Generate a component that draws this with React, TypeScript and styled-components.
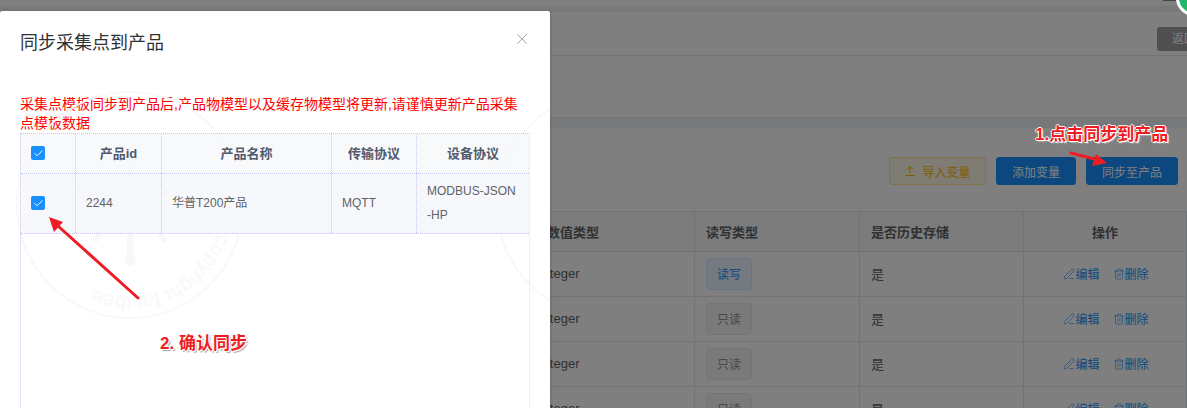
import React from 'react';
import styled, { createGlobalStyle } from 'styled-components';
import { PenLine, Trash2, X, Check } from 'lucide-react';

const GlobalStyle = createGlobalStyle`
  html, body {
    margin: 0;
    padding: 0;
    background: #808080;
    font-family: "Liberation Sans", "Noto Sans CJK SC", sans-serif;
  }
`;

const Frame = styled.div`
  position: relative;
  width: 1187px;
  height: 408px;
  overflow: hidden;
`;

/* page behind the dialog */
const Page = styled.div`
  background: #fff;
  height: 408px;
`;

const TopBand = styled.div`
  height: 6px;
  background: #fff;
  border-bottom: 6px solid #f3f3f3;
`;

const HeaderCard = styled.div`
  height: 105px;
`;

const HeaderRow = styled.div`
  display: flex;
  justify-content: flex-end;
  height: 44px;
  padding-top: 15px;
  box-sizing: border-box;
  border-bottom: 1px solid #e6e6e6;
`;

const BackButton = styled.div`
  width: 60px;
  height: 24px;
  margin-right: -30px;
  padding-left: 15px;
  box-sizing: border-box;
  border-radius: 3px;
  background: #a0a0a6;
  color: #fff;
  font-size: 12px;
  line-height: 24px;
`;

const Band = styled.div`
  height: 10px;
  background: #eff0f3;
  border-top: 1px solid #e8e8ea;
`;

const Toolbar = styled.div`
  display: flex;
  justify-content: flex-end;
  gap: 10px;
  padding: 29px 9px 26px 0;
`;

const ToolButton = styled.div<{ $plain?: boolean }>`
  display: flex;
  align-items: center;
  justify-content: center;
  gap: 6px;
  box-sizing: border-box;
  height: 28px;
  border-radius: 3px;
  font-size: 12px;
  width: ${p => (p.$plain ? '97px' : 'auto')};
  padding: ${p => (p.$plain ? '0' : '0 15px')};
  border: 1px solid ${p => (p.$plain ? '#ffe399' : '#1890ff')};
  background: ${p => (p.$plain ? '#fff8e6' : '#1890ff')};
  color: ${p => (p.$plain ? '#ffba00' : '#fff')};
`;

const DataTable = styled.div`
  display: grid;
  grid-template-columns: 536px 159px 165px 164px 163px;
  grid-template-rows: 40px repeat(4, 45px);
  border-top: 1px solid #dfe6ec;
`;

const HeadCell = styled.div<{ $center?: boolean }>`
  display: flex;
  align-items: center;
  justify-content: ${p => (p.$center ? 'center' : 'flex-start')};
  padding-left: ${p => (p.$center ? '0' : '11px')};
  border-right: 1px solid #dfe6ec;
  border-bottom: 1px solid #dfe6ec;
  background: #f8f8f9;
  color: #606266;
  font-size: 13px;
  font-weight: 700;
`;

const BodyCell = styled.div<{ $center?: boolean; $inset?: number }>`
  display: flex;
  align-items: center;
  justify-content: ${p => (p.$center ? 'center' : 'flex-start')};
  gap: 13px;
  padding-left: ${p => (p.$center ? 2 : p.$inset ?? 11)}px;
  padding-bottom: 1px;
  border-right: 1px solid #dfe6ec;
  border-bottom: 1px solid #dfe6ec;
  color: #606266;
  font-size: 13px;
`;

const Tag = styled.span<{ $active?: boolean }>`
  display: flex;
  align-items: center;
  justify-content: center;
  box-sizing: border-box;
  width: 46px;
  height: 32px;
  border-radius: 4px;
  font-size: 12px;
  border: 1px solid ${p => (p.$active ? '#d1e9ff' : '#e9e9eb')};
  background: ${p => (p.$active ? '#e8f4ff' : '#f4f4f5')};
  color: ${p => (p.$active ? '#1890ff' : '#909399')};
`;

const ActionLink = styled.span`
  display: inline-flex;
  align-items: center;
  color: #1890ff;
  font-size: 12px;
`;

const Overlay = styled.div`
  position: absolute;
  inset: 0;
  background: rgba(0, 0, 0, 0.5);
`;

/* dialog */
const Dialog = styled.div`
  position: absolute;
  left: 0;
  top: 11px;
  width: 550px;
  height: 420px;
  box-sizing: border-box;
  padding: 0 20px;
  border-radius: 2px;
  background: #fff;
  box-shadow: 0 1px 3px rgba(0, 0, 0, 0.3);
  overflow: hidden;
`;

const DialogHeader = styled.div`
  display: flex;
  align-items: center;
  justify-content: space-between;
  height: 62px;
`;

const DialogTitle = styled.span`
  color: #303133;
  font-size: 18px;
  position: relative;
  top: -1px;
`;

const CloseButton = styled.span`
  display: flex;
  color: #909399;
  margin-right: -1px;
  position: relative;
  top: -3px;
`;

const Warning = styled.p`
  margin: 22px 0 0;
  width: 510px;
  color: #ff0000;
  font-size: 14px;
  line-height: 19px;
`;

const Stamp = styled.svg`
  position: absolute;
  left: 0;
  top: 78px;
  pointer-events: none;
`;

const PickTable = styled.div`
  position: relative;
  height: 275px;
  border-left: 1px dotted #c4c4f2;
  border-right: 1px dotted #dcdcf6;
  border-top: 1px dotted #c4c4f2;
`;

const PickRow = styled.div<{ $head?: boolean }>`
  display: grid;
  grid-template-columns: 55px 86px 170px 85px 1fr;
  box-sizing: border-box;
  height: ${p => (p.$head ? '40px' : '60px')};
  border-bottom: 1px dotted #c4c4f2;
  background: ${p => (p.$head ? 'rgba(247, 248, 250, 0.85)' : 'rgba(245, 247, 250, 0.85)')};
`;

const PickCell = styled.div<{ $head?: boolean }>`
  display: flex;
  align-items: center;
  justify-content: ${p => (p.$head ? 'center' : 'flex-start')};
  padding: ${p => (p.$head ? '0' : '0 10px 1px')};
  border-right: 1px dotted #c4c4f2;
  color: ${p => (p.$head ? '#515a6e' : '#606266')};
  font-size: ${p => (p.$head ? '13px' : '12px')};
  font-weight: ${p => (p.$head ? 700 : 400)};
  line-height: 24px;
  word-break: break-all;

  &:last-child {
    border-right: 0;
  }
`;

const BoxCell = styled(PickCell)`
  justify-content: flex-start;
  padding: 0 10px 1px;
`;

const Checkbox = styled.span`
  display: flex;
  align-items: center;
  justify-content: center;
  width: 14px;
  height: 14px;
  border-radius: 2px;
  background: #1890ff;
  color: #fff;
`;

/* screenshot annotations, painted on top of everything */
const Marks = styled.svg`
  position: absolute;
  inset: 0;
`;

const Note = styled.span<{ $x: number; $y: number }>`
  position: absolute;
  left: ${p => p.$x}px;
  top: ${p => p.$y}px;
  color: #f01b23;
  font-size: 17px;
  font-weight: 700;
  line-height: 22px;
  white-space: nowrap;
  text-shadow: -1px 0 #fff, 1px 0 #fff, 0 -1px #fff, 0 1px #fff, 1px 1px #fff, 2px 2px 1px #aaa;
`;

const CornerBadge = styled.div`
  position: absolute;
  left: 1176px;
  top: -20px;
  box-sizing: border-box;
  width: 36px;
  height: 36px;
  border-radius: 50%;
  background: #1fb86a;
  border: 3px solid #fff;
`;

const CornerShade = styled.div`
  position: absolute;
  left: 1163px;
  top: 0;
  width: 15px;
  height: 1px;
  background: #444;
`;

const UploadMark = () => (
  <svg width="12" height="12" viewBox="0 0 12 12" fill="none" stroke="currentColor" strokeWidth="1">
    <path d="M6 8V1.5M3 4.5l3-3 3 3M1.5 10.5h9" />
  </svg>
);

/* the faint round watermark behind the dialog content */
const StampMark = ({ cx, cy }: { cx: number; cy: number }) => (
  <g transform={`translate(${cx} ${cy})`}>
    <circle r="113" strokeWidth="2" />
    <circle r="17" strokeWidth="6" />
    <path
      d="M0 17V52M-15 10L-34 34M15 10L34 34M-17 -6L-52 -18M17 -6L52 -18M0 -17V-52"
      strokeWidth="6"
      strokeLinecap="round"
    />
    <circle cy="55" r="5" fill="#f8f8fa" />
    <path id={`stamp-arc-${cx}`} d="M-92 0A92 92 0 0 1 92 0A92 92 0 0 1 -92 0" stroke="none" />
    <text fontSize="20" fontFamily="Liberation Sans" fill="#f8f8fa" stroke="none">
      <textPath href={`#stamp-arc-${cx}`} startOffset="55%">
        copyright fastbee
      </textPath>
    </text>
  </g>
);

const tagRows = [true, false, false, false];

const Row = ({ active }: { active: boolean }) => (
  <>
    <BodyCell />
    <BodyCell $inset={3}>Integer</BodyCell>
    <BodyCell>
      <Tag $active={active}>{active ? '读写' : '只读'}</Tag>
    </BodyCell>
    <BodyCell>是</BodyCell>
    <BodyCell $center>
      <ActionLink>
        <PenLine size={12} strokeWidth={1.2} />
        编辑
      </ActionLink>
      <ActionLink>
        <Trash2 size={12} strokeWidth={1.2} />
        删除
      </ActionLink>
    </BodyCell>
  </>
);

export default function App() {
  return (
    <Frame>
      <GlobalStyle />
      <Page>
        <TopBand />
        <HeaderCard>
          <HeaderRow>
            <BackButton>返回</BackButton>
          </HeaderRow>
        </HeaderCard>
        <Band />
        <Toolbar>
          <ToolButton $plain>
            <UploadMark />
            导入变量
          </ToolButton>
          <ToolButton>添加变量</ToolButton>
          <ToolButton>同步至产品</ToolButton>
        </Toolbar>
        <DataTable>
          <HeadCell />
          <HeadCell>数值类型</HeadCell>
          <HeadCell>读写类型</HeadCell>
          <HeadCell>是否历史存储</HeadCell>
          <HeadCell $center>操作</HeadCell>
          {tagRows.map((active, i) => (
            <Row key={i} active={active} />
          ))}
        </DataTable>
      </Page>
      <Overlay />
      <Dialog>
        <Stamp width="550" height="340" viewBox="0 0 550 340" fill="none" stroke="#f8f8fa">
          <StampMark cx={130} cy={116} />
          <StampMark cx={610} cy={116} />
        </Stamp>
        <DialogHeader>
          <DialogTitle>同步采集点到产品</DialogTitle>
          <CloseButton>
            <X size={18} strokeWidth={1.1} />
          </CloseButton>
        </DialogHeader>
        <Warning>采集点模板同步到产品后,产品物模型以及缓存物模型将更新,请谨慎更新产品采集点模板数据</Warning>
        <PickTable>
          <PickRow $head>
            <BoxCell $head>
              <Checkbox>
                <Check size={11} strokeWidth={2} />
              </Checkbox>
            </BoxCell>
            <PickCell $head>产品id</PickCell>
            <PickCell $head>产品名称</PickCell>
            <PickCell $head>传输协议</PickCell>
            <PickCell $head>设备协议</PickCell>
          </PickRow>
          <PickRow>
            <BoxCell>
              <Checkbox>
                <Check size={11} strokeWidth={2} />
              </Checkbox>
            </BoxCell>
            <PickCell>2244</PickCell>
            <PickCell>华普T200产品</PickCell>
            <PickCell>MQTT</PickCell>
            <PickCell>MODBUS-JSON-HP</PickCell>
          </PickRow>
        </PickTable>
      </Dialog>
      <CornerShade />
      <CornerBadge />
      <Marks width="1187" height="408" viewBox="0 0 1187 408" fill="#ee1c25" stroke="none">
        <path d="M138 298L58 226" stroke="#ee1c25" strokeWidth="3" strokeLinecap="round" />
        <path d="M49 217L63 222L54 232Z" />
        <path d="M1071 153L1098 160" stroke="#ee1c25" strokeWidth="3" strokeLinecap="round" />
        <path d="M1107 163L1092 166L1096 154Z" />
      </Marks>
      <Note $x={1035} $y={124}>1.点击同步到产品</Note>
      <Note $x={160} $y={333}>2. 确认同步</Note>
    </Frame>
  );
}
